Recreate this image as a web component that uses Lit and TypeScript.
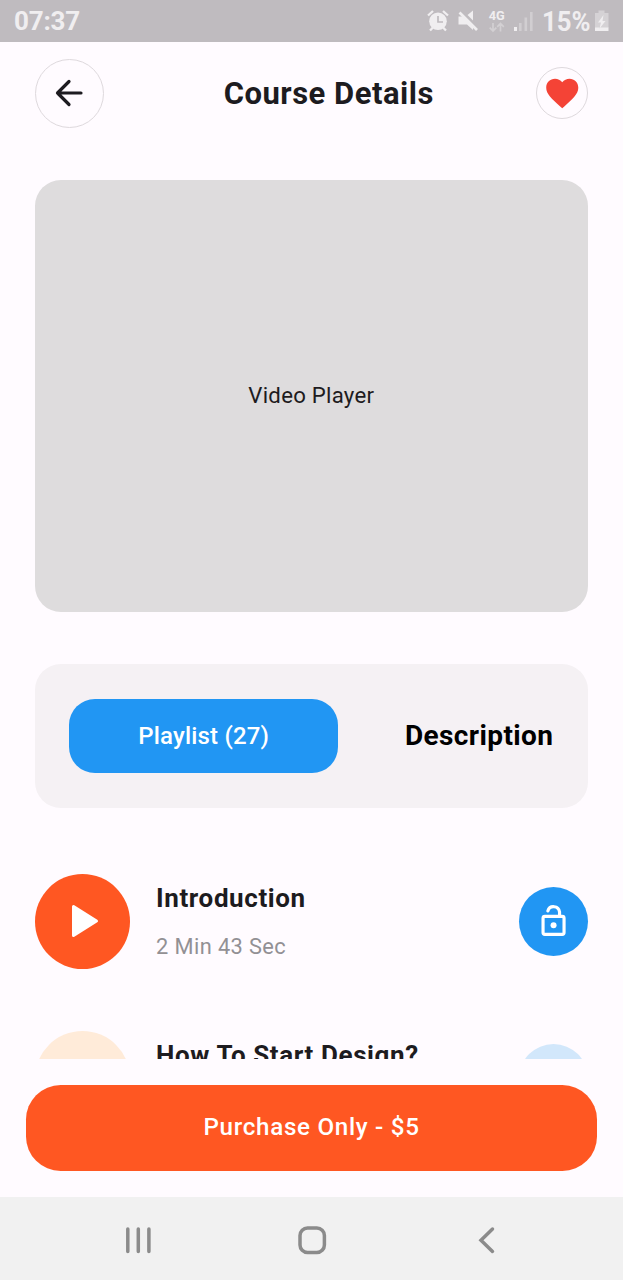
import { LitElement, html, css, svg, nothing } from "lit";
import { customElement, property, state } from "lit/decorators.js";
import { classMap } from "lit/directives/class-map.js";

interface Lesson {
  title: string;
  time: string;
  open: boolean;
}

@customElement("status-bar")
class StatusBar extends LitElement {
  static styles = css`
    :host {
      display: flex;
      justify-content: space-between;
      height: 41.5px;
      padding: 0 14px;
      box-sizing: border-box;
      background: #bfbbbf;
      color: #f0eef0;
      font: 700 26px/42px Roboto, sans-serif;
      letter-spacing: -0.2px;
    }
    svg { display: block; letter-spacing: 0; }
    .net { font-family: Roboto, sans-serif; font-size: 12.5px; font-weight: 700; }
    .battery { font-family: Roboto, sans-serif; font-size: 27.500px; font-weight: 700; }
  `;

  render() {
    return html`
      <span>07:37</span>
      <svg width="184" height="41" viewBox="425 0 184 41" fill="#f0eef0">
        <g fill="none" stroke="#f0eef0">
          <circle cx="438" cy="21.200" r="8.800" fill="#f0eef0" stroke="none" />
          <path d="M428 15.500l5-4.500M448 15.500l-5-4.500M433 27.500l-3 3M443 27.500l3 3" stroke-width="2.300" />
          <path d="M438 16v6h5" stroke="#bfbbbf" stroke-width="1.700" />
        </g>
        <path d="M458.500 16.500h4.500L473 26.500v3.500l-6-5.500h-8.500z" />
        <path d="M467.500 15l5.500-4.500v10z" />
        <path d="M459.500 12.500l17.500 17.500" stroke="#f0eef0" stroke-width="2.600" />
        <text class="net" x="488.800" y="20" textLength="16" lengthAdjust="spacingAndGlyphs">4G</text>
        <path d="M493 23v8m-3.300-3.300l3.300 3.300l3.300-3.300M500.500 31.500v-8m-3.300 3.300l3.300-3.300l3.300 3.300" fill="none" stroke="#d3d0d3" stroke-width="1.700" />
        <rect x="514" y="27" width="3" height="4" />
        <g fill="#d1ced1">
          <rect x="519" y="23" width="2.600" height="8" />
          <rect x="524.500" y="17.500" width="2.600" height="13.500" />
          <rect x="530" y="12" width="2.600" height="19" />
        </g>
        <text class="battery" x="542" y="30.500" textLength="48.500" lengthAdjust="spacingAndGlyphs">15%</text>
        <path d="M598.500 10.500h6v2.500h4v15h-13.500v-15h3.500z" fill="#d5d2d5" />
        <path d="M595 27.500h13.500v3.500h-13.500z M603.500 15l-5.500 7.500h3l-1.500 6 6-7.500h-3z" />
      </svg>
    `;
  }
}

@customElement("lesson-row")
class LessonRow extends LitElement {
  @property({ attribute: false }) lesson!: Lesson;

  static styles = css`
    :host { display: block; }
    .row { display: flex; align-items: center; height: 95px; }
    .play, .lock { display: grid; place-items: center; border-radius: 50%; flex: none; }
    .play { width: 95px; height: 95px; background: #ff5722; }
    .lock { width: 69px; height: 69px; background: #2196f3; }
    .locked .play { background: #ffebd9; }
    .locked .lock { background: #d2e7fb; }
    .text { flex: 1; margin-left: 26.5px; }
    .title { font-weight: 700; font-size: 26px; line-height: 36px; letter-spacing: 0.6px; color: #1d1b20; }
    .time { font-size: 21.800px; line-height: 32px; min-height: 32px; letter-spacing: 0.4px; color: #929094; margin-top: 15px; }
    svg { display: block; }
  `;

  render() {
    const { title, time, open } = this.lesson;
    return html`
      <div class=${classMap({ row: true, locked: !open })}>
        <div class="play">
          <svg width="95" height="95" viewBox="0 0 95 95">
            <path d="M38.500 32.500v29L61.500 47z" fill="#fff" stroke="#fff" stroke-width="3" stroke-linejoin="round" />
          </svg>
        </div>
        <div class="text">
          <div class="title">${title}</div>
          <div class="time">${time}</div>
        </div>
        <div class="lock">
          ${open
            ? html`<svg width="36" height="36" viewBox="0 0 24 24" fill="none" stroke="#fff" stroke-width="2.100" stroke-linecap="round">
                ${svg`<rect x="4.700" y="8.900" width="14" height="12" rx="1.200"/><path d="M7.900 5.300A4 4 0 0 1 15.700 6V9"/><circle cx="11.700" cy="14.900" r="2" fill="#fff" stroke="none"/>`}
              </svg>`
            : nothing}
        </div>
      </div>
    `;
  }
}

@customElement("app-root")
class AppRoot extends LitElement {
  @state() private tab = "playlist";

  private lessons: Lesson[] = [
    { title: "Introduction", time: "2 Min 43 Sec", open: true },
    { title: "How To Start Design?", time: "", open: false },
  ];

  static styles = css`
    :host {
      display: flex;
      flex-direction: column;
      height: 1280px;
      overflow: hidden;
      background: #fffbff;
      color: #1d1b20;
      font-family: Roboto, sans-serif;
    }
    .header {
      display: grid;
      grid-template-columns: 69px 1fr 52px;
      align-items: center;
      padding: 17.300px 35px 0 34.600px;
      height: 69px;
    }
    .circle { box-sizing: border-box; border: 1.700px solid #ded9dd; border-radius: 50%; display: grid; place-items: center; }
    .back { width: 69px; height: 69px; }
    .fav { width: 52px; height: 52px; }
    .heading { margin: 0; padding: 1px 0 0 18px; text-align: center; font-size: 31px; line-height: 40px; font-weight: 700; letter-spacing: 0.5px; }
    .video {
      box-sizing: border-box;
      margin: 52.200px 35px 0 34.600px;
      padding-bottom: 2px;
      height: 432px;
      border-radius: 26px;
      background: #dedcdd;
      display: grid;
      place-items: center;
      font-size: 22.200px;
      letter-spacing: 0.250px;
    }
    .tabs {
      box-sizing: border-box;
      margin: 52px 35px 0 34.600px;
      height: 144px;
      padding: 35px 34.600px;
      border-radius: 26px;
      background: #f5f1f4;
      display: flex;
      justify-content: space-between;
    }
    .tab { display: grid; place-items: center; border-radius: 26px; font-weight: 700; font-size: 28px; letter-spacing: 0.4px; color: #000; }
    .tab.active { width: 269px; background: #2196f3; color: #fff; font-weight: 500; font-size: 24px; letter-spacing: 0.2px; }
    .list { flex: 1; min-height: 0; overflow: hidden; padding: 65.800px 35px 0 34.600px; display: flex; flex-direction: column; gap: 62.500px; }
    .buy { box-sizing: border-box; margin: 26px; height: 86.500px; padding-bottom: 2px; border-radius: 34.600px; background: #ff5722; color: #fff; display: grid; place-items: center; font-weight: 500; font-size: 24.200px; letter-spacing: 0.7px; }
    .nav { height: 83px; background: #f1f1f1; flex: none; }
    .header, .video, .tabs, .buy { flex: none; }
    svg { display: block; }
  `;

  render() {
    return html`
      <status-bar></status-bar>
      <div class="header">
        <div class="circle back">
          <svg width="30" height="30" viewBox="0 0 30 30" fill="none" stroke="#1d1b20" stroke-width="3.200" stroke-linecap="round" stroke-linejoin="round">
            <path d="M27 15H3.500M15 3.500L3.500 15L15 26.500" />
          </svg>
        </div>
        <h1 class="heading">Course Details</h1>
        <div class="circle fav">
          <svg width="38.500" height="38.500" viewBox="0 0 24 24" fill="#f44336">
            <path d="M12 21.350l-1.450-1.320C5.400 15.360 2 12.280 2 8.500 2 5.420 4.420 3 7.500 3c1.740 0 3.410.810 4.500 2.090C13.090 3.810 14.760 3 16.500 3 19.580 3 22 5.420 22 8.500c0 3.780-3.400 6.860-8.550 11.540L12 21.350z" />
          </svg>
        </div>
      </div>
      <div class="video">Video Player</div>
      <div class="tabs">
        <div class=${classMap({ tab: true, active: this.tab === "playlist" })} @click=${() => (this.tab = "playlist")}>Playlist (27)</div>
        <div class=${classMap({ tab: true, active: this.tab === "description" })} @click=${() => (this.tab = "description")}>Description</div>
      </div>
      <div class="list">${this.lessons.map((l) => html`<lesson-row .lesson=${l}></lesson-row>`)}</div>
      <div class="buy">Purchase Only - $5</div>
      <div class="nav">
        <svg width="623" height="83" viewBox="0 1197 623 83" fill="none" stroke="#8b8b8b" stroke-width="3.500">
          <path d="M127.800 1229v22.500M138.300 1229v22.500M148.900 1229v22.500" stroke-linecap="round" />
          <rect x="300" y="1228" width="24.400" height="24.400" rx="7.500" />
          <path d="M492.500 1229l-11.500 11.200l11.500 11.200" stroke-linecap="round" />
        </svg>
      </div>
    `;
  }
}
